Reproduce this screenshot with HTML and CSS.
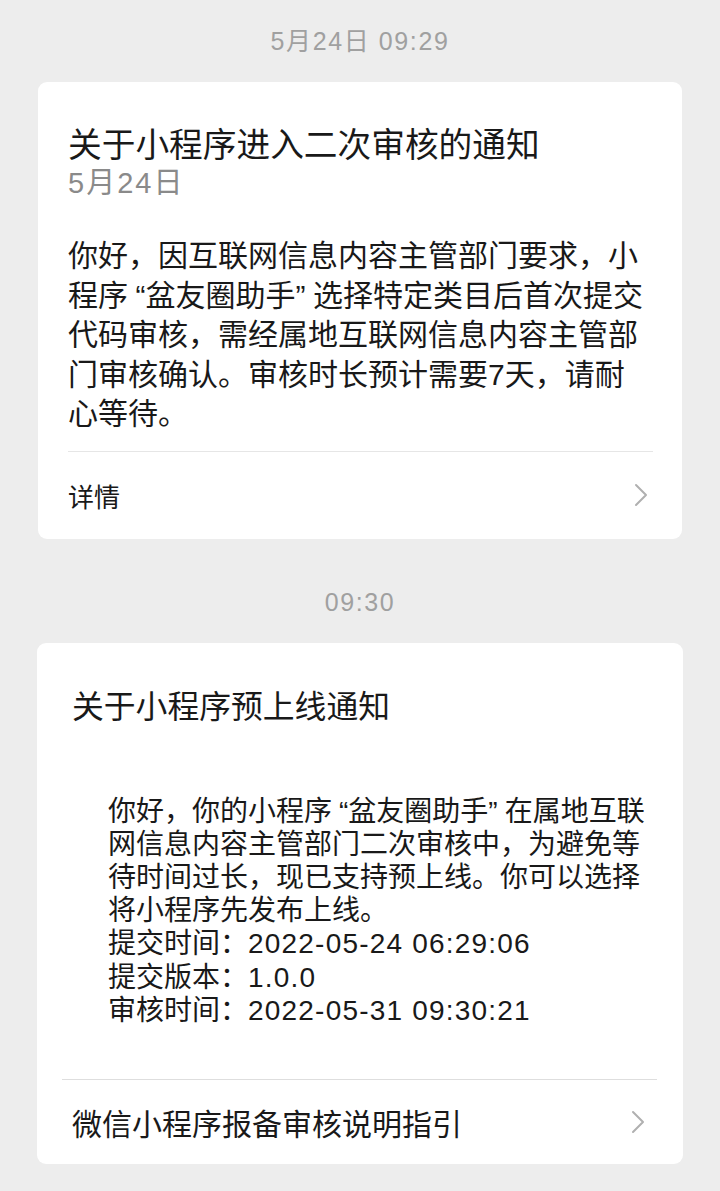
FILE: index.html
```html
<!DOCTYPE html>
<html lang="zh-CN">
<head>
<meta charset="utf-8">
<title>通知</title>
<link rel="stylesheet" href="styles.css">
</head>
<body>
<div class="page">
  <div class="time first">5月24日 09:29</div>
  <div class="card card1">
    <div class="title1">关于小程序进入二次审核的通知</div>
    <div class="date">5月24日</div>
    <div class="body1">你好，因互联网信息内容主管部门要求，小<br>程序<span class="qo">“</span>盆友圈助手<span class="qc">”</span>选择特定类目后首次提交<br>代码审核，需经属地互联网信息内容主管部<br>门审核确认。审核时长预计需要7天，请耐<br>心等待。</div>
    <div class="footer footer1">
      <span class="link1">详情</span>
      <svg class="chev" width="14" height="24" viewBox="0 0 14 24"><polyline points="2,2 12,12 2,22" fill="none" stroke="#b0b0b0" stroke-width="2" stroke-linecap="round" stroke-linejoin="round"/></svg>
    </div>
  </div>

  <div class="time">09:30</div>
  <div class="card card2">
    <div class="title2">关于小程序预上线通知</div>
    <div class="body2">你好，你的小程序<span class="qo">“</span>盆友圈助手<span class="qc">”</span>在属地互联<br>网信息内容主管部门二次审核中，为避免等<br>待时间过长，现已支持预上线。你可以选择<br>将小程序先发布上线。<br>提交时间：<span class="num">2022-05-24 06:29:06</span><br>提交版本：<span class="num">1.0.0</span><br>审核时间：<span class="num">2022-05-31 09:30:21</span></div>
    <div class="footer footer2">
      <span class="link2">微信小程序报备审核说明指引</span>
      <svg class="chev" width="14" height="24" viewBox="0 0 14 24"><polyline points="2,2 12,12 2,22" fill="none" stroke="#b0b0b0" stroke-width="2" stroke-linecap="round" stroke-linejoin="round"/></svg>
    </div>
  </div>
</div>
</body>
</html>
```
FILE: styles.css
```css
html, body {
  margin: 0;
  padding: 0;
  background: #ededed;
}
body {
  font-family: "Liberation Sans", "Noto Sans CJK SC", sans-serif;
  color: #191919;
  width: 720px;
  height: 1191px;
  overflow: hidden;
}
.page {
  display: flex;
  flex-direction: column;
}
.time {
  margin-top: 48px;
  margin-bottom: 26px;
  text-align: center;
  font-size: 25px;
  line-height: 30px;
  letter-spacing: 1.6px;
  color: #a0a0a0;
}
.time.first {
  margin-top: 26px;
}
.card {
  background: #ffffff;
  border-radius: 9px;
}
.card1 {
  margin: 0 38px;
  padding: 43px 29px 0 30px;
}
.title1 {
  font-size: 33.7px;
  line-height: 40px;
  white-space: nowrap;
}
.date {
  font-size: 29px;
  line-height: 36px;
  letter-spacing: 2px;
  color: #8a8a8a;
}
.body1 {
  margin-top: 35px;
  font-size: 30px;
  line-height: 39.5px;
  white-space: nowrap;
}
.qo {
  padding-left: 0.25em;
}
.qc {
  padding-right: 0.25em;
}
.footer {
  display: flex;
  align-items: center;
  justify-content: space-between;
  border-top: 1px solid #e6e6e6;
}
.footer1 {
  margin-top: 17px;
  height: 87px;
  padding-right: 5px;
}
.link1 {
  font-size: 26px;
}
.card2 {
  margin: 0 37px;
  padding-top: 44px;
}
.title2 {
  padding-left: 35px;
  font-size: 31.8px;
  line-height: 40px;
}
.body2 {
  margin-top: 68px;
  padding-left: 71px;
  font-size: 28px;
  line-height: 33.2px;
  white-space: nowrap;
}
.num {
  letter-spacing: 1.2px;
}
.footer2 {
  margin: 52px 26px 0 25px;
  height: 84px;
  padding: 0 12px 0 10px;
  border-top-color: #dedede;
}
.link2 {
  font-size: 30px;
}
.chev {
  display: block;
}
```
